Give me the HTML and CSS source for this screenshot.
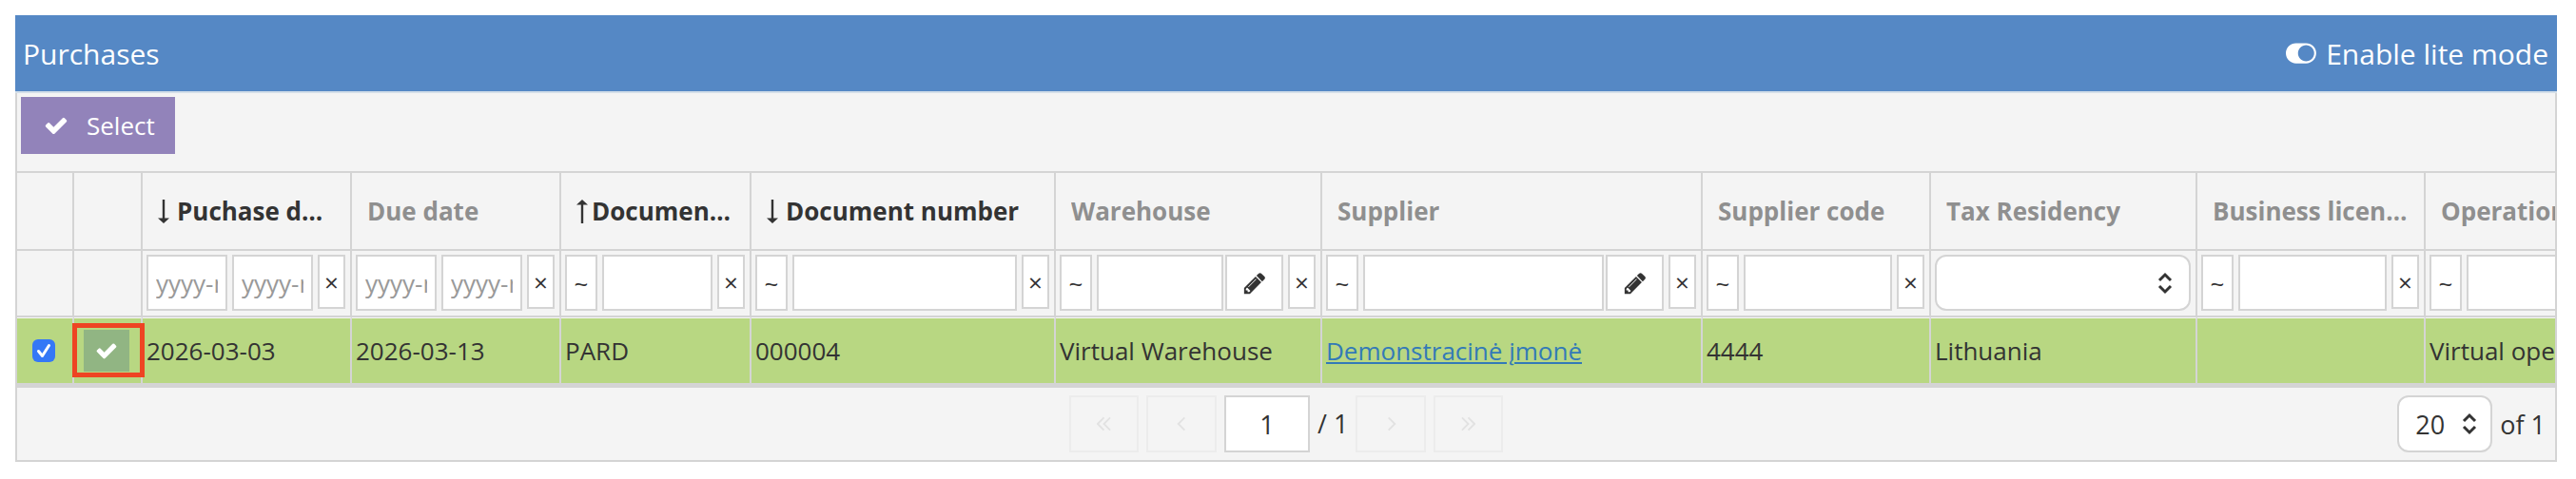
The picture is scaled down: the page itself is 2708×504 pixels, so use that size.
FILE: index.html
```html
<!DOCTYPE html>
<html lang="en">
<head>
<meta charset="utf-8">
<title>Purchases</title>
<link rel="stylesheet" href="styles.css">
</head>
<body>
<svg class="defs" width="0" height="0" aria-hidden="true">
  <symbol id="i-check" viewBox="0 0 1792 1792"><path fill="currentColor" d="M1671 566q0 40-28 68l-724 724-136 136q-28 28-68 28t-68-28l-136-136-362-362q-28-28-28-68t28-68l136-136q28-28 68-28t68 28l294 295 656-657q28-28 68-28t68 28l136 136q28 28 28 68z"/></symbol>
  <symbol id="i-pencil" viewBox="0 0 1792 1792"><path fill="currentColor" d="M491 1536l91-91-235-235-91 91v107h128v128h107zm523-928q0-22-22-22-10 0-17 7l-542 542q-7 7-7 17 0 22 22 22 10 0 17-7l542-542q7-7 7-17zm-54-192l416 416-832 832h-416v-416zm683 96q0 53-37 90l-166 166-416-416 166-165q36-38 90-38 53 0 91 38l235 234q37 39 37 91z"/></symbol>
  <symbol id="i-down" viewBox="0 0 12 25"><path fill="currentColor" d="M4.8 0h2.4v19.5H12L6 25 0 19.5h4.8z"/></symbol>
  <symbol id="i-up" viewBox="0 0 12 25"><path fill="currentColor" d="M4.8 25h2.4V5.5H12L6 0 0 5.5h4.8z"/></symbol>
  <symbol id="i-updown" viewBox="0 0 16 24"><path fill="none" stroke="currentColor" stroke-width="3" d="M2 9l6-6 6 6M2 15l6 6 6-6"/></symbol>
</svg>
<section class="panel">
  <header class="panel-head">
    <span class="panel-title">Purchases</span>
    <span class="lite">
      <svg class="toggle" viewBox="0 0 2048 1792"><path fill="currentColor" d="M0 896q0-130 51-248.5t136.5-204 204-136.5 248.5-51h640q130 0 248.5 51t204 136.5 136.5 204 51 248.5-51 248.5-136.5 204-204 136.5-248.5 51h-640q-130 0-248.5-51t-204-136.5-136.5-204-51-248.5zm1280 512q104 0 198.5-40.5t163.5-109.5 109.5-163.5 40.5-198.5-40.5-198.5-109.5-163.5-163.5-109.5-198.5-40.5-198.5 40.5-163.5 109.5-109.5 163.5-40.5 198.5 40.5 198.5 109.5 163.5 163.5 109.5 198.5 40.5z"/></svg>
      Enable lite mode
    </span>
  </header>
  <div class="toolbar">
    <button class="select-btn" type="button"><svg class="select-check"><use href="#i-check"/></svg>Select</button>
  </div>
  <div class="table-wrap">
    <table class="grid">
      <colgroup>
        <col class="w60"><col class="w72"><col class="w220"><col class="w220"><col class="w200"><col class="w320"><col class="w280"><col class="w400"><col class="w240"><col class="w280"><col class="w240"><col class="w240">
      </colgroup>
      <thead>
        <tr class="head-row">
          <th></th>
          <th></th>
          <th class="sorted"><div class="th-in"><svg class="arrow"><use href="#i-down"/></svg><span class="th-text">Puchase date</span></div></th>
          <th><div class="th-in"><span class="th-text">Due date</span></div></th>
          <th class="sorted"><div class="th-in tight"><svg class="arrow"><use href="#i-up"/></svg><span class="th-text">Document type</span></div></th>
          <th class="sorted"><div class="th-in"><svg class="arrow"><use href="#i-down"/></svg><span class="th-text">Document number</span></div></th>
          <th><div class="th-in"><span class="th-text">Warehouse</span></div></th>
          <th><div class="th-in"><span class="th-text">Supplier</span></div></th>
          <th><div class="th-in"><span class="th-text">Supplier code</span></div></th>
          <th><div class="th-in"><span class="th-text">Tax Residency</span></div></th>
          <th><div class="th-in"><span class="th-text">Business license number</span></div></th>
          <th><div class="th-in"><span class="th-text">Operation</span></div></th>
        </tr>
        <tr class="filter-row">
          <td></td>
          <td></td>
          <td><div class="filter"><input class="fi" placeholder="yyyy-mm-dd"><input class="fi" placeholder="yyyy-mm-dd"><span class="clr">×</span></div></td>
          <td><div class="filter"><input class="fi" placeholder="yyyy-mm-dd"><input class="fi" placeholder="yyyy-mm-dd"><span class="clr">×</span></div></td>
          <td><div class="filter"><span class="tld">~</span><input class="fi"><span class="clr">×</span></div></td>
          <td><div class="filter"><span class="tld">~</span><input class="fi"><span class="clr">×</span></div></td>
          <td><div class="filter"><span class="tld">~</span><div class="joined"><input class="fi"><span class="edit"><svg class="pencil"><use href="#i-pencil"/></svg></span></div><span class="clr">×</span></div></td>
          <td><div class="filter"><span class="tld">~</span><div class="joined"><input class="fi"><span class="edit"><svg class="pencil"><use href="#i-pencil"/></svg></span></div><span class="clr">×</span></div></td>
          <td><div class="filter"><span class="tld">~</span><input class="fi"><span class="clr">×</span></div></td>
          <td><div class="filter"><div class="sel"><svg class="updown"><use href="#i-updown"/></svg></div></div></td>
          <td><div class="filter"><span class="tld">~</span><input class="fi"><span class="clr">×</span></div></td>
          <td><div class="filter"><span class="tld">~</span><input class="fi"><span class="clr">×</span></div></td>
        </tr>
      </thead>
      <tbody>
        <tr class="data-row">
          <td><div class="check-cell"><span class="checkbox"><svg viewBox="0 0 24 24"><path fill="none" stroke="#fff" stroke-width="3" stroke-linecap="round" stroke-linejoin="round" d="M6.5 12.5l4 5L17.5 6.5"/></svg></span></div></td>
          <td><div class="check-cell"><span class="row-btn"><svg class="row-check"><use href="#i-check"/></svg><span class="mark"></span></span></div></td>
          <td>2026-03-03</td>
          <td>2026-03-13</td>
          <td>PARD</td>
          <td>000004</td>
          <td>Virtual Warehouse</td>
          <td><a class="link" href="#">Demonstracinė įmonė</a></td>
          <td>4444</td>
          <td>Lithuania</td>
          <td></td>
          <td>Virtual operation</td>
        </tr>
      </tbody>
    </table>
  </div>
  <footer class="pager">
    <div></div>
    <div class="pages">
      <span class="pg first"><svg viewBox="0 0 16 16"><path d="M8 1L1 8l7 7M15 1L8 8l7 7"/></svg></span>
      <span class="pg prev"><svg viewBox="0 0 16 16"><path d="M11 1L4 8l7 7"/></svg></span>
      <input class="page-input" value="1">
      <span class="page-total">/ 1</span>
      <span class="pg next"><svg viewBox="0 0 16 16"><path d="M5 1l7 7-7 7"/></svg></span>
      <span class="pg last"><svg viewBox="0 0 16 16"><path d="M1 1l7 7-7 7M8 1l7 7-7 7"/></svg></span>
    </div>
    <div class="size">
      <div class="size-sel">20<svg class="updown"><use href="#i-updown"/></svg></div>
      <span>of 1</span>
    </div>
  </footer>
</section>
</body>
</html>
```

FILE: styles.css
```css
* { box-sizing: border-box; }
html, body { height: 100%; }
body {
  margin: 0;
  padding: 16px 20px 0 16px;
  background: #fff;
  color: #333;
  font-family: "Open Sans", sans-serif;
  font-size: 26px;
  overflow: hidden;
}
.defs { position: absolute; }
.panel { width: 2672px; }
.panel-head {
  height: 82px;
  padding: 0 9px 0 8px;
  background: #5588c5;
  border-bottom: 2px solid #d4dfe9;
  color: #fff;
  display: flex;
  align-items: center;
  justify-content: space-between;
}
.panel-title { font-size: 30px; }
.lite { font-size: 30px; display: flex; align-items: center; gap: 8px; }
.toggle { width: 34px; height: 30px; }
.toolbar {
  height: 84px;
  padding: 4px;
  background: #f4f4f4;
  border-left: 2px solid #d4d4d4;
  border-right: 2px solid #d4d4d4;
  border-bottom: 2px solid #d4d4d4;
}
.select-btn {
  width: 162px;
  height: 60px;
  padding: 0 0 0 24px;
  border: 0;
  background: #9283ba;
  color: #fff;
  font: 26px "Open Sans", sans-serif;
  display: flex;
  align-items: center;
  gap: 19px;
}
.select-check { width: 26px; height: 26px; }
.table-wrap {
  overflow: hidden;
  background: #f4f4f4;
  border-left: 2px solid #d4d4d4;
  border-right: 2px solid #d4d4d4;
}
.grid { border-collapse: separate; border-spacing: 0; table-layout: fixed; width: 2772px; }
.w60 { width: 60px; }
.w72 { width: 72px; }
.w200 { width: 200px; }
.w220 { width: 220px; }
.w240 { width: 240px; }
.w280 { width: 280px; }
.w320 { width: 320px; }
.w400 { width: 400px; }
.grid th, .grid td {
  padding: 0;
  border-right: 2px solid #d4d4d4;
  border-bottom: 2px solid #d4d4d4;
  white-space: nowrap;
}
.head-row th { height: 82px; font-size: 26px; font-weight: 700; color: #8f8f8f; text-align: left; }
.head-row th.sorted { color: #333; }
.th-in { display: flex; align-items: center; gap: 8px; padding: 0 14px 0 16px; }
.th-in.tight { gap: 4px; }
.th-text { overflow: hidden; text-overflow: ellipsis; min-width: 0; }
.arrow { width: 12px; height: 25px; flex: none; }
.filter-row td { height: 70px; vertical-align: top; }
.filter { display: flex; align-items: flex-start; gap: 5px; padding: 4px 5px 0 4px; }
.fi {
  flex: 1 1 0;
  min-width: 0;
  width: 0;
  height: 59px;
  padding: 0 8px;
  border: 2px solid #d4d4d4;
  border-radius: 0;
  background: #fff;
  font: 26px "Open Sans", sans-serif;
  color: #333;
  outline: none;
}
.fi::placeholder { color: #999; opacity: 1; }
.clr, .tld {
  flex: none;
  display: flex;
  align-items: center;
  justify-content: center;
  background: #fff;
  border: 2px solid #d4d4d4;
}
.clr { width: 29px; height: 57px; }
.tld { width: 34px; height: 59px; }
.joined { flex: 1 1 0; min-width: 0; display: flex; gap: 2px; }
.edit {
  flex: none;
  width: 61px;
  height: 59px;
  display: flex;
  align-items: center;
  justify-content: center;
  background: #fff;
  border: 2px solid #d4d4d4;
}
.pencil { width: 26px; height: 26px; color: #333; }
.sel {
  flex: 1;
  height: 59px;
  padding-right: 17px;
  display: flex;
  align-items: center;
  justify-content: flex-end;
  background: #fff;
  border: 2px solid #d4d4d4;
  border-radius: 12px;
}
.updown { width: 16px; height: 24px; color: #333; }
.data-row td {
  height: 74px;
  padding: 0 0 0 4px;
  background: #b8d782;
  border-top: 1px solid #f8f8f8;
  border-bottom: 5px solid #d4d4d4;
  color: #333;
}
.data-row td:nth-child(1), .data-row td:nth-child(2) { padding: 0; }
.check-cell { display: flex; justify-content: center; align-items: center; }
.checkbox { width: 24px; height: 24px; border-radius: 6px; background: #3478f6; display: block; margin-left: -2px; }
.checkbox svg { display: block; width: 24px; height: 24px; }
.row-btn {
  position: relative;
  width: 48px;
  height: 44px;
  margin-left: -2px;
  background: #91b583;
  color: #fff;
  display: flex;
  align-items: center;
  justify-content: center;
}
.row-check { width: 24px; height: 24px; }
.mark {
  position: absolute;
  left: -12px;
  right: -16px;
  top: -7px;
  bottom: -6px;
  border: 5px solid #ee4423;
}
.link { color: #337ab7; text-decoration: underline; }
.pager {
  height: 78px;
  padding: 8px 0 0;
  background: #f4f4f4;
  border-left: 2px solid #d4d4d4;
  border-right: 2px solid #d4d4d4;
  border-bottom: 2px solid #d4d4d4;
  display: grid;
  grid-template-columns: 1fr auto 1fr;
  align-items: start;
  font-size: 27px;
}
.pages { display: flex; align-items: flex-start; gap: 8px; }
.pg {
  width: 74px;
  height: 60px;
  display: flex;
  align-items: center;
  justify-content: center;
  border: 2px solid #ececec;
  color: #e2e2e2;
}
.pg.first, .pg.last { width: 73px; }
.pg svg { width: 15px; height: 16px; fill: none; stroke: currentColor; stroke-width: 2; }
.page-input {
  width: 90px;
  height: 60px;
  border: 2px solid #d4d4d4;
  border-radius: 0;
  background: #fff;
  text-align: center;
  font: 27px "Open Sans", sans-serif;
  color: #333;
  outline: none;
}
.page-total { width: 32px; line-height: 60px; white-space: nowrap; }
.size { display: flex; justify-content: flex-end; align-items: center; gap: 8px; padding-right: 10px; }
.size-sel {
  width: 100px;
  height: 60px;
  padding: 0 14px 0 17px;
  display: flex;
  align-items: center;
  justify-content: space-between;
  background: #fff;
  border: 2px solid #d4d4d4;
  border-radius: 12px;
}
```
